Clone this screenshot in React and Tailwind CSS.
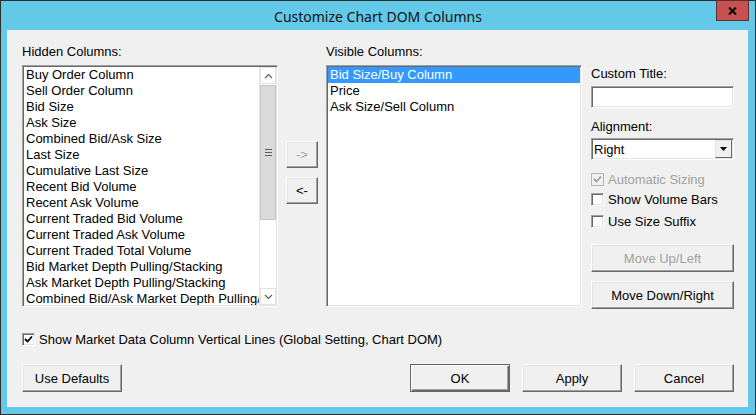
import React from 'react';

const sunken =
  'border border-t-[#a0a0a0] border-l-[#a0a0a0] border-r-white border-b-white shadow-[inset_1px_1px_0_#696969,inset_-1px_-1px_0_#e3e3e3] bg-white';
const raised =
  'border border-t-white border-l-white border-r-[#696969] border-b-[#696969] shadow-[inset_-1px_-1px_0_#a0a0a0,inset_1px_1px_0_#e3e3e3] bg-[#f0f0f0]';

const hiddenColumns = [
  'Buy Order Column',
  'Sell Order Column',
  'Bid Size',
  'Ask Size',
  'Combined Bid/Ask Size',
  'Last Size',
  'Cumulative Last Size',
  'Recent Bid Volume',
  'Recent Ask Volume',
  'Current Traded Bid Volume',
  'Current Traded Ask Volume',
  'Current Traded Total Volume',
  'Bid Market Depth Pulling/Stacking',
  'Ask Market Depth Pulling/Stacking',
  'Combined Bid/Ask Market Depth Pulling/Stacking',
];

const visibleColumns = ['Bid Size/Buy Column', 'Price', 'Ask Size/Sell Column'];

function Checkbox({ checked, disabled, label, className = 'h-[22px]' }) {
  return (
    <div className={`flex items-center ${className}`}>
      <div
        className={
          disabled
            ? 'w-[13px] h-[13px] border border-[#b5b5b5] bg-[#f0f0f0] flex items-center justify-center'
            : 'w-[13px] h-[13px] border border-t-[#a0a0a0] border-l-[#a0a0a0] border-r-white border-b-white shadow-[inset_1px_1px_0_#696969,inset_-1px_-1px_0_#e3e3e3] bg-white flex items-center justify-center'
        }
      >
        {checked && (
          <svg width="9" height="9" viewBox="0 0 9 9">
            <path
              d="M1 4 L3.5 6.5 L8 1.5"
              fill="none"
              stroke={disabled ? '#a0a0a0' : '#000'}
              strokeWidth="1.8"
            />
          </svg>
        )}
      </div>
      <span className={disabled ? 'ml-[4px] text-[#a0a0a0]' : 'ml-[4px] text-black'}>{label}</span>
    </div>
  );
}

function Button({ children, className = '', disabled, isDefault }) {
  const frame = isDefault
    ? 'border border-[#646464] shadow-[inset_1px_1px_0_#ffffff,inset_-1px_-1px_0_#696969,inset_-2px_-2px_0_#a0a0a0] bg-[#f0f0f0]'
    : raised;
  return (
    <div
      className={`${frame} ${className} flex items-center justify-center ${disabled ? 'text-[#a0a0a0]' : 'text-black'}`}
    >
      {children}
    </div>
  );
}

function ScrollBar() {
  return (
    <div className="w-[17px] h-full flex flex-col bg-white border-l border-[#e6e6e6]">
      <div className="h-[17px] flex items-center justify-center border border-[#e3e3e3]">
        <svg width="9" height="6" viewBox="0 0 9 6">
          <path d="M1 5 L4.5 1.5 L8 5" fill="none" stroke="#606060" strokeWidth="1.2" />
        </svg>
      </div>
      <div className="h-[135px] mt-[1px] bg-[#dadada] border border-[#c6c6c6] flex items-center justify-center">
        <div className="flex flex-col gap-[2px]">
          <div className="w-[7px] h-[1px] bg-[#606060]" />
          <div className="w-[7px] h-[1px] bg-[#606060]" />
          <div className="w-[7px] h-[1px] bg-[#606060]" />
        </div>
      </div>
      <div className="flex-1" />
      <div className="h-[17px] flex items-center justify-center border border-[#e3e3e3]">
        <svg width="9" height="6" viewBox="0 0 9 6">
          <path d="M1 1 L4.5 4.5 L8 1" fill="none" stroke="#606060" strokeWidth="1.2" />
        </svg>
      </div>
    </div>
  );
}

export default function App() {
  return (
    <div className="w-[756px] h-[415px] bg-[#63c9e9] border border-[#2d2d2d] flex flex-col relative font-['Liberation_Sans',Arial,sans-serif] text-[13px] leading-[15px] text-black">
      {/* Title bar */}
      <div className="h-[29px] flex items-center justify-center">
        <span className="font-['Noto_Sans',sans-serif] text-[14px] text-[#111] mt-[1px]">
          Customize Chart DOM Columns
        </span>
      </div>
      <div className="absolute top-[-1px] right-[6px] w-[33px] h-[21px] bg-[#c75050] border border-[#5a3030] flex items-center justify-center">
        <svg width="9" height="8" viewBox="0 0 9 8">
          <path d="M1 0.5 L8 7.5 M8 0.5 L1 7.5" stroke="#000" strokeWidth="2" />
        </svg>
      </div>

      {/* Client area */}
      <div className="ml-[6px] mr-[7px] mb-[7px] flex-1 bg-[#f0f0f0] pl-[15px] pr-[14px] pt-[14px] flex flex-col">
        <div className="flex">
          {/* Hidden columns */}
          <div className="w-[256px] flex flex-col">
            <div className="h-[15px]">Hidden Columns:</div>
            <div className={`${sunken} mt-[6px] h-[242px] p-[1px] flex overflow-hidden`}>
              <div className="flex-1 overflow-hidden pl-[2px]">
                {hiddenColumns.map((c) => (
                  <div key={c} className="h-[16px] leading-[16px] whitespace-nowrap">
                    {c}
                  </div>
                ))}
              </div>
              <ScrollBar />
            </div>
          </div>

          {/* Arrow buttons */}
          <div className="ml-[8px] w-[32px] flex flex-col pt-[97px]">
            <Button className="h-[27px]" disabled>
              -&gt;
            </Button>
            <Button className="h-[27px] mt-[9px]">&lt;-</Button>
          </div>

          {/* Visible columns */}
          <div className="ml-[8px] w-[256px] flex flex-col">
            <div className="h-[15px]">Visible Columns:</div>
            <div className={`${sunken} mt-[6px] h-[242px] p-[1px]`}>
              {visibleColumns.map((c, i) => (
                <div
                  key={c}
                  className={
                    i === 0
                      ? 'h-[16px] leading-[16px] pl-[2px] bg-[#3399ff] text-white'
                      : 'h-[16px] leading-[16px] pl-[2px]'
                  }
                >
                  {c}
                </div>
              ))}
            </div>
          </div>

          {/* Right panel */}
          <div className="ml-[9px] w-[143px] flex flex-col">
            <div className="h-[15px] mt-[22px]">Custom Title:</div>
            <div className={`${sunken} mt-[5px] h-[22px]`} />
            <div className="h-[15px] mt-[11px]">Alignment:</div>
            <div className={`${sunken} mt-[4px] h-[22px] flex items-center pl-[2px] pr-[1px]`}>
              <span className="flex-1">Right</span>
              <div className="w-[17px] h-[18px] border border-t-[#e3e3e3] border-l-[#e3e3e3] border-r-[#696969] border-b-[#696969] bg-[#f0f0f0] flex items-center justify-center">
                <svg width="7" height="4" viewBox="0 0 7 4">
                  <path d="M0 0 L7 0 L3.5 4 Z" fill="#000" />
                </svg>
              </div>
            </div>
            <div className="mt-[10px]">
              <Checkbox checked disabled label="Automatic Sizing" className="h-[18px]" />
              <Checkbox label="Show Volume Bars" />
              <Checkbox label="Use Size Suffix" />
            </div>
            <Button className="h-[28px] mt-[12px]" disabled>
              Move Up/Left
            </Button>
            <Button className="h-[28px] mt-[9px]">Move Down/Right</Button>
          </div>
        </div>

        {/* Global setting checkbox */}
        <div className="mt-[19px]">
          <Checkbox checked label="Show Market Data Column Vertical Lines (Global Setting, Chart DOM)" />
        </div>

        {/* Bottom buttons */}
        <div className="mt-[14px] flex">
          <Button className="w-[100px] h-[28px]">Use Defaults</Button>
          <div className="ml-auto flex gap-[12px]">
            <Button className="w-[100px] h-[28px]" isDefault>
              OK
            </Button>
            <Button className="w-[100px] h-[28px]">Apply</Button>
            <Button className="w-[100px] h-[28px]">Cancel</Button>
          </div>
        </div>
      </div>
    </div>
  );
}
